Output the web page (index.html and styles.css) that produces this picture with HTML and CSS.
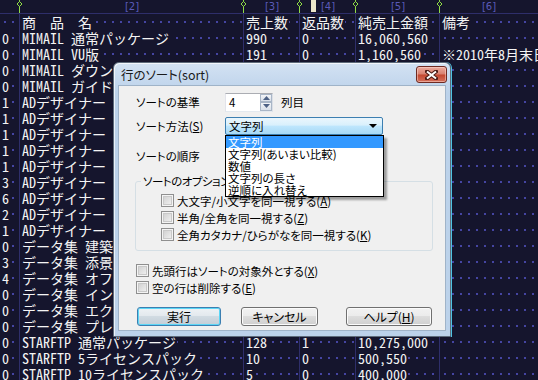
FILE: index.html
```html
<!DOCTYPE html>
<html lang="ja">
<head>
    <meta charset="UTF-8">
    <title>行のソート</title>
    <link rel="stylesheet" href="styles.css">
</head>
<body>
<div class="screen">
    <div class="ruler">
        <div class="seg w1"><span class="mark"><svg width="7" height="13" viewBox="0 0 7 13"><path d="M3.5 0V13" stroke="#8fdc46"/><path d="M3.5 1.5L6 4L3.5 6.5L1 4Z" fill="#15152d" stroke="#8fdc46"/></svg></span></div>
        <div class="seg w2">[2]<span class="mark"><svg width="7" height="13" viewBox="0 0 7 13"><path d="M3.5 0V13" stroke="#8fdc46"/><path d="M3.5 1.5L6 4L3.5 6.5L1 4Z" fill="#15152d" stroke="#8fdc46"/></svg></span></div>
        <div class="seg w3">[3]<span class="mark"><svg width="7" height="13" viewBox="0 0 7 13"><path d="M3.5 0V13" stroke="#8fdc46"/><path d="M3.5 1.5L6 4L3.5 6.5L1 4Z" fill="#15152d" stroke="#8fdc46"/></svg></span></div>
        <div class="seg w4"><span class="cursor"></span>[4]<span class="mark"><svg width="7" height="13" viewBox="0 0 7 13"><path d="M3.5 0V13" stroke="#8fdc46"/><path d="M3.5 1.5L6 4L3.5 6.5L1 4Z" fill="#15152d" stroke="#8fdc46"/></svg></span></div>
        <div class="seg w5">[5]<span class="mark"><svg width="7" height="13" viewBox="0 0 7 13"><path d="M3.5 0V13" stroke="#8fdc46"/><path d="M3.5 1.5L6 4L3.5 6.5L1 4Z" fill="#15152d" stroke="#8fdc46"/></svg></span></div>
        <div class="seg w6">[6]</div>
    </div>

    <div class="sheet" id="sheet">
        <!-- rows are filled in by the script below -->
    </div>

    <div class="dialog">
        <div class="titlebar">
            <span class="title">行のソート(sort)</span>
            <span class="close">
                <svg width="13" height="10" viewBox="0 0 13 10">
                    <path d="M2 1.5L11 8.5M11 1.5L2 8.5" stroke="#4a1a14" stroke-width="4" stroke-linecap="square"/>
                    <path d="M2 1.5L11 8.5M11 1.5L2 8.5" stroke="#fff" stroke-width="2"/>
                </svg>
            </span>
        </div>
        <div class="client">
            <div class="field">
                <span class="field-label">ソートの基準</span>
                <span class="spin">
                    <span class="spin-value">4</span>
                    <span class="spin-buttons">
                        <span class="spin-btn"><svg width="7" height="4" viewBox="0 0 7 4"><path d="M0 4L3.5 0L7 4Z" fill="#4d6185"/></svg></span>
                        <span class="spin-btn"><svg width="7" height="4" viewBox="0 0 7 4"><path d="M0 0L3.5 4L7 0Z" fill="#4d6185"/></svg></span>
                    </span>
                </span>
                <span class="unit">列目</span>
            </div>
            <div class="field combo-row">
                <span class="field-label">ソート方法(<u>S</u>)</span>
                <span class="combo">
                    <span>文字列</span>
                    <svg width="8" height="4" viewBox="0 0 8 4"><path d="M0 0H8L4 4Z" fill="#000"/></svg>
                </span>
            </div>
            <div class="field order-row">
                <span class="field-label">ソートの順序</span>
            </div>

            <fieldset class="group">
                <legend>ソートのオプション</legend>
                <div class="check"><span class="box"></span>大文字/小文字を同一視する(<u>A</u>)</div>
                <div class="check"><span class="box"></span>半角/全角を同一視する(<u>Z</u>)</div>
                <div class="check"><span class="box"></span>全角カタカナ/ひらがなを同一視する(<u>K</u>)</div>
            </fieldset>

            <div class="outer-checks">
                <div class="check"><span class="box"></span>先頭行はソートの対象外とする(<u>X</u>)</div>
                <div class="check"><span class="box"></span>空の行は削除する(<u>E</u>)</div>
            </div>

            <div class="buttons">
                <button class="btn btn-default btn-run">実行</button>
                <button class="btn btn-cancel">キャンセル</button>
                <button class="btn btn-help">ヘルプ(<u>H</u>)</button>
            </div>

            <ul class="droplist">
                <li class="selected">文字列</li>
                <li>文字列(あいまい比較)</li>
                <li>数値</li>
                <li>文字列の長さ</li>
                <li>逆順に入れ替え</li>
            </ul>
        </div>
    </div>
</div>

<script>
    // one array per line: no, name, sold, returned, net, note
    const rows = [
        ['', '商　品　名', '売上数', '返品数', '純売上金額', '備考'],
        ['0', 'MIMAIL 通常パッケージ', '990', '0', '16,060,560', ''],
        ['0', 'MIMAIL VU版', '191', '0', '1,160,560', '※2010年8月末日で販売終了'],
        ['0', 'MIMAIL ダウンロード版', '35', '0', '98,000', ''],
        ['0', 'MIMAIL ガイドブック', '12', '0', '24,000', ''],
        ['1', 'ADデザイナー 通常パッケージ', '84', '1', '3,360,000', ''],
        ['1', 'ADデザイナー VU版', '40', '0', '800,000', ''],
        ['1', 'ADデザイナー 5ライセンス', '12', '0', '1,200,000', ''],
        ['1', 'ADデザイナー 10ライセンス', '6', '0', '1,080,000', ''],
        ['1', 'ADデザイナー アカデミック', '22', '0', '440,000', ''],
        ['3', 'ADデザイナー ダウンロード版', '63', '3', '2,400,000', ''],
        ['6', 'ADデザイナー 素材集', '51', '6', '900,000', ''],
        ['2', 'ADデザイナー ガイドブック', '18', '2', '48,000', ''],
        ['1', 'ADデザイナー 解説DVD', '9', '1', '24,000', ''],
        ['0', 'データ集 建築', '30', '0', '150,000', ''],
        ['3', 'データ集 添景', '27', '3', '120,000', ''],
        ['4', 'データ集 オフィス', '25', '4', '105,000', ''],
        ['0', 'データ集 インテリア', '19', '0', '95,000', ''],
        ['0', 'データ集 エクステリア', '14', '0', '70,000', ''],
        ['0', 'データ集 プレゼン', '11', '0', '55,000', ''],
        ['0', 'STARFTP 通常パッケージ', '128', '1', '10,275,000', ''],
        ['0', 'STARFTP 5ライセンスパック', '10', '0', '500,550', ''],
        ['0', 'STARFTP 10ライセンスパック', '5', '0', '400,000', '']
    ];

    const sheet = document.getElementById('sheet');
    for (const r of rows) {
        let html = '<div class="row">';
        r.forEach((text, i) => {
            html += `<div class="cell w${i + 1}">` + (text ? `<span>${text}</span>` : '') + '</div>';
        });
        sheet.innerHTML += html + '</div>';
    }
</script>
</body>
</html>
```

FILE: styles.css
```css
body {
    margin: 0;
    background-color: #15152d;
}
.screen {
    position: relative;
    width: 538px;
    height: 380px;
    overflow: hidden;
    background-color: #15152d;
    color: #f4f4f4;
    font-family: "Noto Sans Mono CJK JP", "Liberation Mono", "Noto Sans CJK JP", monospace;
    font-size: 14px;
}

/* column widths, shared by ruler and rows */
.w1 { width: 20px; }
.w2 { width: 224px; }
.w3 { width: 56px; }
.w4 { width: 56px; }
.w5 { width: 84px; }
.w6 { flex: 1; }

.ruler {
    display: flex;
    height: 13px;
    border-bottom: 1px solid #2e2e6a;
}
.seg {
    position: relative;
    box-sizing: border-box;
    text-align: center;
    font-family: "DejaVu Sans", sans-serif;
    font-size: 10px;
    line-height: 13px;
    color: #5a5ab8;
}
.mark {
    position: absolute;
    right: -3px;
    top: 0;
    width: 7px;
    height: 13px;
    z-index: 1;
}
.mark svg {
    display: block;
}
.cursor {
    position: absolute;
    left: 11px;
    top: 0;
    width: 5px;
    height: 12px;
    background-color: #ebe6c9;
}

.row {
    display: flex;
    height: 16px;
    line-height: 16px;
}
.cell {
    box-sizing: border-box;
    padding-left: 2px;
    border-right: 1px solid #2e2e6a;
    overflow: hidden;
    white-space: nowrap;
    background-image: linear-gradient(90deg, #4545a2 2px, transparent 2px);
    background-size: 8px 2px;
    background-repeat: repeat-x;
    background-position: 4px 7px;
}
.cell.w6 {
    border-right: none;
}
.cell span {
    background-color: #15152d;
    padding-right: 1px;
}

/* dialog */
.dialog {
    position: absolute;
    left: 113px;
    top: 62px;
    width: 338px;
    height: 275px;
    box-sizing: border-box;
    display: flex;
    flex-direction: column;
    padding: 0 4px 5px;
    border: 1px solid #5d6b7b;
    border-radius: 6px 6px 0 0;
    background: linear-gradient(#d3e2f3, #bcd2ea 30px);
    box-shadow: 1px 0 0 #4fc4e4, inset 1px 1px 0 rgba(255, 255, 255, 0.7);
    color: #000;
    font-family: "Noto Sans CJK JP", sans-serif;
    font-size: 11.5px;
    font-feature-settings: "palt";
}
.titlebar {
    position: relative;
    height: 22px;
    display: flex;
    align-items: center;
    padding-left: 3px;
}
.title {
    font-size: 12.5px;
    color: #1a1a1a;
}
.close {
    position: absolute;
    right: -1px;
    top: 3px;
    width: 31px;
    height: 17px;
    box-sizing: border-box;
    display: flex;
    align-items: center;
    justify-content: center;
    border: 1px solid #6e2a22;
    border-radius: 3px;
    background: linear-gradient(#ecaa9d, #d8806f 48%, #c3472f 52%, #d4705c);
    box-shadow: inset 0 0 0 1px rgba(255, 220, 210, 0.5);
}
.client {
    position: relative;
    flex: 1;
    box-sizing: border-box;
    padding: 6px 0 0 17px;
    background-color: #f0f0f0;
    border: 1px solid #9fb3c8;
}
.field {
    display: flex;
    align-items: center;
    height: 20px;
}
.combo-row {
    height: 18px;
    margin-top: 5px;
}
.order-row {
    margin-top: 11px;
}
.field-label {
    width: 89px;
}
.spin {
    display: flex;
    width: 48px;
    height: 19px;
    box-sizing: border-box;
    border: 1px solid #abadb3;
    border-color: #abadb3 #dbdfe6 #e3e9ef #e2e3ea;
    background-color: #fff;
}
.spin-value {
    flex: 1;
    padding-left: 3px;
    line-height: 17px;
}
.spin-buttons {
    display: flex;
    flex-direction: column;
    width: 12px;
}
.spin-btn {
    flex: 1;
    display: flex;
    align-items: center;
    justify-content: center;
    border: 1px solid #a9b6c7;
    background: linear-gradient(#f3f5f8, #d9e0e9);
}
.spin-btn svg {
    display: block;
}
.unit {
    margin-left: 8px;
}
.combo {
    display: flex;
    align-items: center;
    justify-content: space-between;
    width: 158px;
    height: 18px;
    box-sizing: border-box;
    padding: 0 5px 0 3px;
    border: 1px solid #3c7fb1;
    border-radius: 2px;
    background: linear-gradient(#eaf6fd, #d9f0fc 45%, #bee6fd 50%, #a7d9f5);
}
.droplist {
    position: absolute;
    left: 106px;
    top: 49px;
    width: 157px;
    margin: 0;
    padding: 0;
    list-style: none;
    border: 1px solid #000;
    background-color: #fff;
    box-shadow: 3px 3px 2px rgba(0, 0, 0, 0.35);
}
.droplist li {
    height: 12px;
    line-height: 12px;
    padding-left: 2px;
    white-space: nowrap;
}
.droplist .selected {
    background-color: #3399ff;
    color: #fff;
}

.group {
    width: 298px;
    box-sizing: border-box;
    margin: 8px 0 0 -1px;
    padding: 4px 0 7px 5px;
    border: 1px solid #d5dfe5;
    border-radius: 3px;
    min-inline-size: 0;
}
.group legend {
    padding: 0 2px;
    line-height: 14px;
    letter-spacing: -0.5px;
}
.group .check {
    margin-left: 20px;
}
.check {
    display: flex;
    align-items: center;
    height: 17px;
    white-space: nowrap;
}
.box {
    width: 13px;
    height: 13px;
    box-sizing: border-box;
    margin-right: 3px;
    border: 1px solid #8f8f8f;
    background: linear-gradient(135deg, #cbcbcb, #f6f6f6);
    box-shadow: inset 0 0 0 1px #f4f4f4, inset 0 0 0 2px #c9c9c9;
}
.outer-checks {
    margin-top: 11px;
}
.buttons {
    display: flex;
    margin-top: 11px;
    margin-left: 1px;
}
.btn {
    height: 19px;
    padding: 0;
    font-family: inherit;
    font-size: 12px;
    font-feature-settings: "palt";
    color: #000;
    border: 1px solid #707070;
    border-radius: 3px;
    background: linear-gradient(#f2f2f2, #ebebeb 50%, #dddddd 50%, #cfcfcf);
    box-shadow: inset 0 0 0 1px #fbfbfb;
}
.btn-default {
    border-color: #3c7fb1;
    background: linear-gradient(#eef2f5, #e2e8ed 50%, #d1dbe2 50%, #c3ced7);
    box-shadow: inset 0 0 0 1px #5cd6f6;
}
.btn-run { width: 84px; }
.btn-cancel { width: 77px; margin-left: 20px; }
.btn-help { width: 86px; margin-left: 28px; }
```
